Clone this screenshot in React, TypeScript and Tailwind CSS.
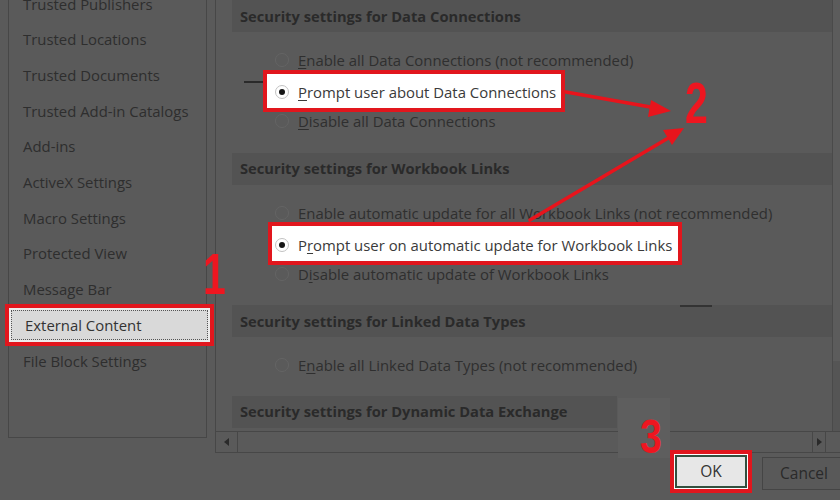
import React from "react";

const navItems = [
  "Trusted Publishers",
  "Trusted Locations",
  "Trusted Documents",
  "Trusted Add-in Catalogs",
  "Add-ins",
  "ActiveX Settings",
  "Macro Settings",
  "Protected View",
  "Message Bar",
  "External Content",
  "File Block Settings",
];

function Radio({ checked }: { checked?: boolean }) {
  if (checked) {
    return (
      <span className="flex h-[14px] w-[14px] shrink-0 items-center justify-center rounded-full border border-[#c2c2c2] bg-white">
        <span className="h-[6px] w-[6px] rounded-full bg-[#161616]" />
      </span>
    );
  }
  return <span className="h-[14px] w-[14px] shrink-0 rounded-full border border-[#646464]" />;
}

function SectionHeader({ title }: { title: string }) {
  return (
    <div className="flex h-[32px] items-center bg-[#535353] pl-[8px] text-[14.7px] font-bold text-[#2a2a2a]">
      {title}
    </div>
  );
}

function Option({ label, keyIdx }: { label: string; keyIdx: number }) {
  return (
    <div className="flex h-[30.5px] items-center gap-[9px] pl-[43px] text-[#2f2f2f]">
      <Radio />
      <span className="whitespace-nowrap">
        {label.slice(0, keyIdx)}
        <span className="underline underline-offset-2">{label[keyIdx]}</span>
        {label.slice(keyIdx + 1)}
      </span>
    </div>
  );
}

// selected option, framed in red
function PickedOption({ label, keyIdx, left, width, pad }: { label: string; keyIdx: number; left: string; width: string; pad: string }) {
  return (
    <div className={`relative z-10 -my-[6px] flex h-[42.5px] items-center border-4 border-[#e1161d] bg-white pt-[3px] text-[#3a3a3a] ${left} ${width} ${pad}`}>
      <Radio checked />
      <span className="ml-[9px] whitespace-nowrap">
        {label.slice(0, keyIdx)}
        <span className="underline underline-offset-2">{label[keyIdx]}</span>
        {label.slice(keyIdx + 1)}
      </span>
    </div>
  );
}

export default function App() {
  return (
    <div className="relative h-[500px] w-[840px] overflow-hidden bg-[#5a5a5a] font-['Open_Sans',sans-serif] text-[14.9px]">
      <div className="flex h-[453px]">
        {/* left nav */}
        <div className="w-[215px] shrink-0 pl-[8px]">
          <div className="h-[452px] w-[199px] border-x border-b border-[#474747]">
            <div className="-mt-[14px] flex flex-col">
              {navItems.map((item) =>
                item === "External Content" ? (
                  <div
                    key={item}
                    className="relative z-10 -my-[3px] -ml-[4px] h-[42px] w-[209px] border-4 border-[#e1161d] bg-[#ececec] p-[2px]"
                  >
                    <div className="flex h-full items-center border border-dotted border-[#555] bg-[#d9d9d9] pl-[13px] text-[#333]">
                      {item}
                    </div>
                  </div>
                ) : (
                  <div key={item} className="flex h-[35.7px] items-center pl-[14px] text-[#2e2e2e]">
                    {item}
                  </div>
                )
              )}
            </div>
          </div>
        </div>

        {/* settings panel */}
        <div className="flex flex-1 flex-col border-l border-[#474747]">
          <div className="flex h-[431px] overflow-hidden">
            <div className="flex-1 pl-[16px]">
              <SectionHeader title="Security settings for Data Connections" />
              <div className="mt-[13px]">
                <Option label="Enable all Data Connections (not recommended)" keyIdx={0} />
                <PickedOption label="Prompt user about Data Connections" keyIdx={0} left="ml-[31px]" width="w-[302px]" pad="pl-[8px]" />
                <Option label="Disable all Data Connections" keyIdx={0} />
              </div>
              <div className="mt-[16px]">
                <SectionHeader title="Security settings for Workbook Links" />
              </div>
              <div className="mt-[13px]">
                <Option label="Enable automatic update for all Workbook Links (not recommended)" keyIdx={99} />
                <PickedOption label="Prompt user on automatic update for Workbook Links" keyIdx={1} left="ml-[36px]" width="w-[414px]" pad="pl-[3px]" />
                <Option label="Disable automatic update of Workbook Links" keyIdx={1} />
              </div>
              <div className="mt-[16px]">
                <SectionHeader title="Security settings for Linked Data Types" />
              </div>
              <div className="mt-[13px]">
                <Option label="Enable all Linked Data Types (not recommended)" keyIdx={1} />
              </div>
              <div className="mt-[15px] w-[385px]">
                <SectionHeader title="Security settings for Dynamic Data Exchange" />
              </div>
            </div>
            <div className="flex w-[8px] flex-col border-l border-[#4a4a4a] bg-[#5c5c5c]">
              <div className="flex-1" />
              <div className="h-[70px] bg-[#555]" />
            </div>
          </div>

          {/* horizontal scrollbar */}
          <div className="flex h-[22px] items-stretch border-y border-[#474747] pr-[14px]">
            <div className="flex w-[22px] items-center justify-center border-r border-[#474747]">
              <span className="h-0 w-0 border-y-[4px] border-r-[5px] border-y-transparent border-r-[#2a2a2a]" />
            </div>
            <div className="flex-1" />
            <div className="flex w-[14px] items-center justify-center border-x border-[#474747]">
              <span className="h-0 w-0 border-y-[4px] border-l-[5px] border-y-transparent border-l-[#2a2a2a]" />
            </div>
          </div>
        </div>
      </div>

      {/* dialog buttons */}
      <div className="-mr-[6px] -mt-[3px] flex justify-end gap-[10px]">
        <div className="h-[43px] w-[82px] border-4 border-[#e1161d] bg-white p-[1px]">
          <div className="flex h-full items-center justify-center border-2 border-[#33503f] bg-[#e7e7e7] text-[15.5px] text-[#333]">
            OK
          </div>
        </div>
        <div className="mt-[7px] flex h-[33px] w-[84px] items-center justify-center border border-[#454545] bg-[#595959] text-[15.5px] text-[#2a2a2a]">
          Cancel
        </div>
      </div>

      {/* step markers and arrows */}
      <div className="pointer-events-none absolute left-[618px] top-[398px] h-[60px] w-[52px] bg-[#5e5e5e]" />
      <div className="pointer-events-none absolute left-[244px] top-[81px] h-[2px] w-[20px] bg-[#2a2a2a]" />
      <div className="pointer-events-none absolute left-[680px] top-[305px] h-[2px] w-[32px] bg-[#333]" />
      <svg className="pointer-events-none absolute left-0 top-0" width="840" height="500" viewBox="0 0 840 500">
        <g stroke="#e8141c" strokeWidth="3.5" strokeLinecap="round" fill="#e8141c">
          <line x1="566" y1="92" x2="656" y2="108" />
          <polygon points="671,111 651,100 648,117" stroke="none" />
          <line x1="530" y1="220" x2="670" y2="137" />
          <polygon points="684,128 663,130 672,145" stroke="none" />
        </g>
      </svg>
      <span className="pointer-events-none absolute left-[203px] top-[246px] origin-left scale-x-[0.72] font-['Liberation_Sans',sans-serif] text-[57px] font-bold leading-none text-[#ee1620]">
        1
      </span>
      <span className="pointer-events-none absolute left-[685px] top-[75px] origin-left scale-x-[0.72] font-['Liberation_Sans',sans-serif] text-[57px] font-bold leading-none text-[#ee1620]">
        2
      </span>
      <span className="pointer-events-none absolute left-[640px] top-[412px] origin-left scale-x-[0.8] font-['Liberation_Sans',sans-serif] text-[49px] font-bold leading-none text-[#ee1620]">
        3
      </span>
    </div>
  );
}
